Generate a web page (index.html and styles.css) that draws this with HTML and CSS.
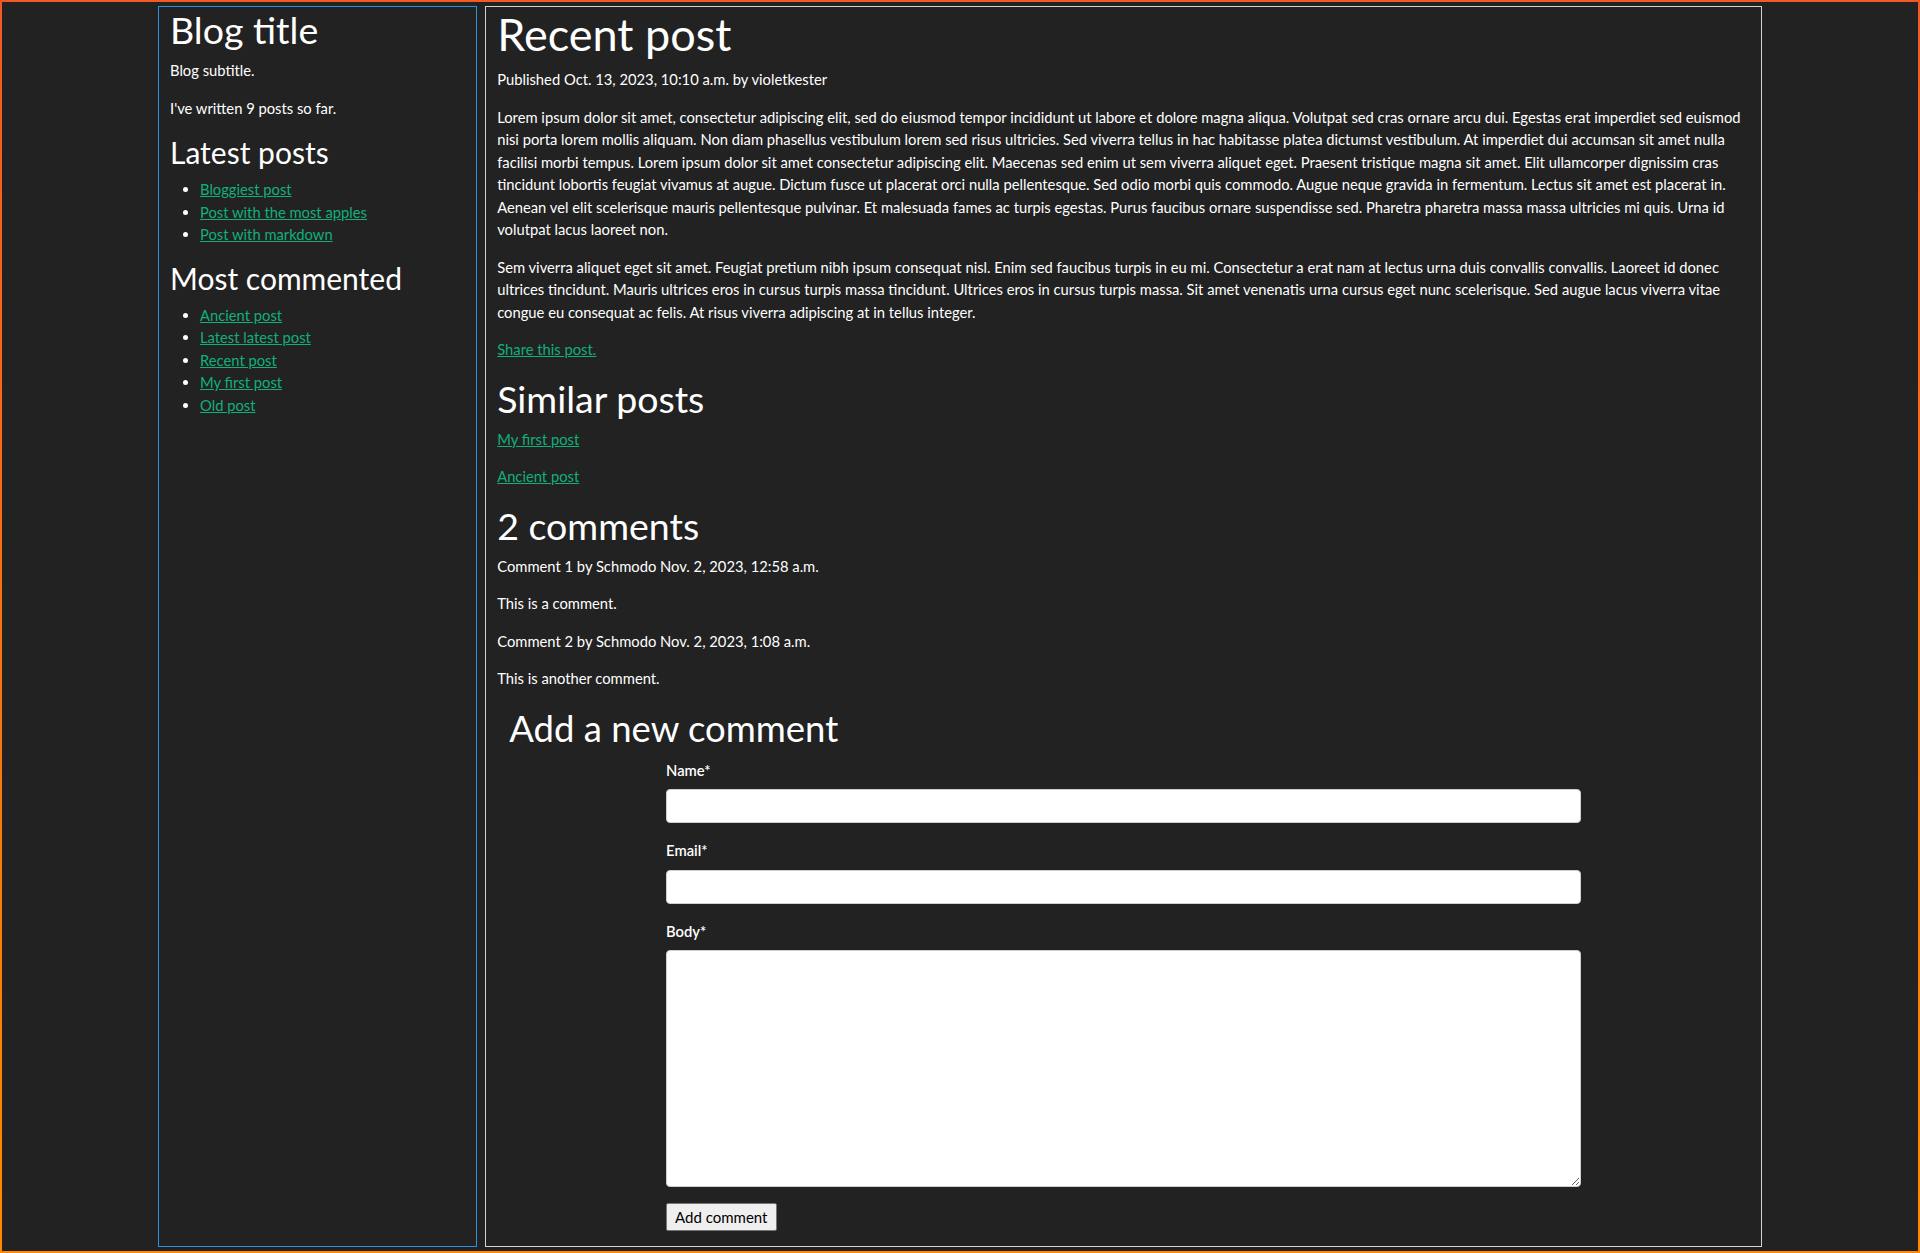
FILE: index.html
```html
<!DOCTYPE html>
<html lang="en">
<head>
<meta charset="utf-8">
<title>Recent post</title>
<link rel="stylesheet" href="styles.css">
</head>
<body>
<div class="frame">
  <div class="layout">
    <aside class="sidebar">
      <h1 class="side-title">Blog title</h1>
      <p>Blog subtitle.</p>
      <p>I've written 9 posts so far.</p>
      <h2 class="side-heading">Latest posts</h2>
      <ul class="post-list">
        <li><a href="#">Bloggiest post</a></li>
        <li><a href="#">Post with the most apples</a></li>
        <li><a href="#">Post with markdown</a></li>
      </ul>
      <h2 class="side-heading">Most commented</h2>
      <ul class="post-list">
        <li><a href="#">Ancient post</a></li>
        <li><a href="#">Latest latest post</a></li>
        <li><a href="#">Recent post</a></li>
        <li><a href="#">My first post</a></li>
        <li><a href="#">Old post</a></li>
      </ul>
    </aside>
    <main class="content">
      <h1 class="post-title">Recent post</h1>
      <p>Published Oct. 13, 2023, 10:10 a.m. by violetkester</p>
      <p>Lorem ipsum dolor sit amet, consectetur adipiscing elit, sed do eiusmod tempor incididunt ut labore et dolore magna aliqua. Volutpat sed cras ornare arcu dui. Egestas erat imperdiet sed euismod nisi porta lorem mollis aliquam. Non diam phasellus vestibulum lorem sed risus ultricies. Sed viverra tellus in hac habitasse platea dictumst vestibulum. At imperdiet dui accumsan sit amet nulla facilisi morbi tempus. Lorem ipsum dolor sit amet consectetur adipiscing elit. Maecenas sed enim ut sem viverra aliquet eget. Praesent tristique magna sit amet. Elit ullamcorper dignissim cras tincidunt lobortis feugiat vivamus at augue. Dictum fusce ut placerat orci nulla pellentesque. Sed odio morbi quis commodo. Augue neque gravida in fermentum. Lectus sit amet est placerat in. Aenean vel elit scelerisque mauris pellentesque pulvinar. Et malesuada fames ac turpis egestas. Purus faucibus ornare suspendisse sed. Pharetra pharetra massa massa ultricies mi quis. Urna id volutpat lacus laoreet non.</p>
      <p>Sem viverra aliquet eget sit amet. Feugiat pretium nibh ipsum consequat nisl. Enim sed faucibus turpis in eu mi. Consectetur a erat nam at lectus urna duis convallis convallis. Laoreet id donec ultrices tincidunt. Mauris ultrices eros in cursus turpis massa tincidunt. Ultrices eros in cursus turpis massa. Sit amet venenatis urna cursus eget nunc scelerisque. Sed augue lacus viverra vitae congue eu consequat ac felis. At risus viverra adipiscing at in tellus integer.</p>
      <p><a href="#">Share this post.</a></p>
      <h2 class="section-heading">Similar posts</h2>
      <p><a href="#">My first post</a></p>
      <p><a href="#">Ancient post</a></p>
      <h2 class="section-heading">2 comments</h2>
      <p>Comment 1 by Schmodo Nov. 2, 2023, 12:58 a.m.</p>
      <p>This is a comment.</p>
      <p>Comment 2 by Schmodo Nov. 2, 2023, 1:08 a.m.</p>
      <p>This is another comment.</p>
      <section class="comment-section">
        <h2 class="section-heading form-heading">Add a new comment</h2>
        <form class="comment-form" action="#">
          <div class="field">
            <label class="field-label" for="name">Name*</label>
            <input class="field-input" id="name" type="text">
          </div>
          <div class="field">
            <label class="field-label" for="email">Email*</label>
            <input class="field-input" id="email" type="email">
          </div>
          <div class="field">
            <label class="field-label" for="body">Body*</label>
            <textarea class="field-input field-textarea" id="body"></textarea>
          </div>
          <button class="submit-btn" type="button">Add comment</button>
        </form>
      </section>
    </main>
  </div>
</div>
</body>
</html>
```

FILE: styles.css
```css
* {
  box-sizing: border-box;
}

html, body {
  margin: 0;
  padding: 0;
  background: #222222;
}

body {
  color: #ffffff;
  font-family: Lato, "Open Sans", "Liberation Sans", sans-serif;
  font-size: 14.75px;
  line-height: 22.5px;
}

.frame {
  height: 100vh;
  border: 2px solid #f4621f;
  border-image: linear-gradient(to bottom, #f25a24, #ff8a00) 1;
  padding: 4px 0;
}

.layout {
  width: 1604px;
  height: 100%;
  margin: 0 auto;
  display: grid;
  grid-template-columns: 1fr 4fr;
  gap: 8px;
}

.sidebar {
  border: 1px solid #2b93dc;
  padding: 0 11px;
}

.content {
  border: 1px solid #d2d2d2;
  padding: 0 11px;
}

p {
  margin: 0 0 15px;
}

a {
  color: #10b07b;
}

h1, h2 {
  font-weight: 400;
  margin: 0;
}

.side-title {
  font-size: 37.5px;
  line-height: 45px;
  margin-bottom: 7px;
}

.post-title {
  font-size: 45px;
  line-height: 54px;
  margin-bottom: 7px;
}

.side-heading {
  font-size: 30px;
  line-height: 36px;
  margin: 14px 0 8px;
}

.section-heading {
  font-size: 37.5px;
  line-height: 45px;
  margin: 15px 0 7px;
}

.form-heading {
  font-size: 36.5px;
  margin: 16px 0 8px;
}

.post-list {
  margin: 0 0 14px;
  padding-left: 30px;
}

.comment-section {
  padding: 0 12px;
}

.comment-form {
  width: 915px;
  margin: 0 auto;
  display: flex;
  flex-direction: column;
  align-items: flex-start;
}

.field {
  width: 100%;
  display: flex;
  flex-direction: column;
  gap: 8px;
  margin-bottom: 16px;
}

.field-label {
  font-size: 14.75px;
  font-weight: 600;
  line-height: 22.5px;
}

.field-input {
  width: 100%;
  height: 34px;
  background: #ffffff;
  border: 1px solid #cfcfcf;
  border-radius: 4px;
  font: inherit;
  color: #000;
}

.field-textarea {
  height: 237px;
  resize: both;
}

.submit-btn {
  font-family: Lato, "Open Sans", "Liberation Sans", sans-serif;
  font-size: 15px;
  line-height: 18px;
  padding: 4px 8px;
  color: #000;
  background: #efefef;
  border: 1px solid #767676;
  border-radius: 2px;
}
```
